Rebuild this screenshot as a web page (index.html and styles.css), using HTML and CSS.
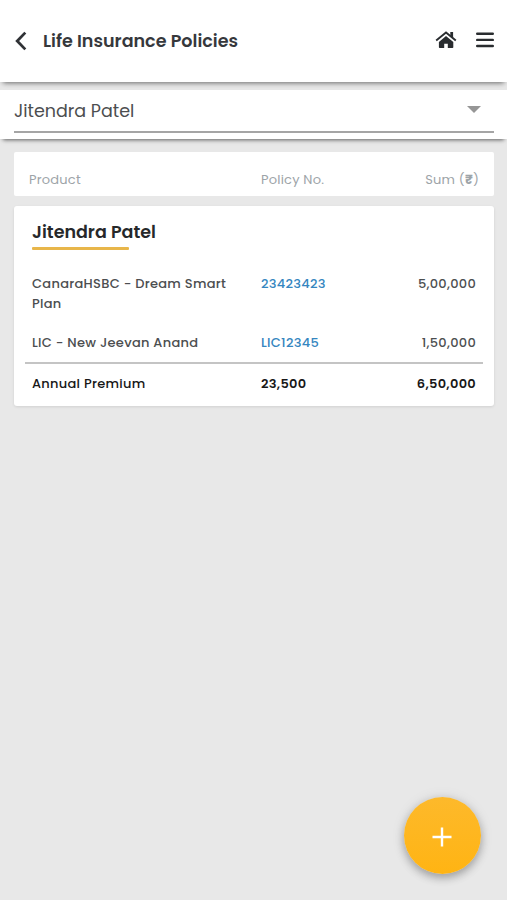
FILE: index.html
```html
<!DOCTYPE html>
<html lang="en">
<head>
<meta charset="utf-8">
<title>Life Insurance Policies</title>
<link rel="stylesheet" href="styles.css">
</head>
<body>
<header class="topbar">
  <svg class="back" viewBox="0 0 12 20"><path d="M10.3 1.6 2.2 10l8.1 8.4" fill="none" stroke="#303236" stroke-width="2.8"/></svg>
  <h1 class="title">Life Insurance Policies</h1>
  <svg class="home" viewBox="0 0 22 18"><path d="M11 5 3.9 11v5.2q0 .8.8.8h4.5v-4.2h3.6V17h4.7q.8 0 .8-.8V11z" fill="#292c2f"/><path d="M1.2 9.5 11 1.5l9.8 8" fill="none" stroke="#292c2f" stroke-width="1.9"/><path d="M15.3 1h2.8v6l-2.8-2.2z" fill="#292c2f"/></svg>
  <svg class="menu" viewBox="0 0 18 16"><path d="M1.2 1.8h15.6M1.2 7.9h15.6M1.2 14h15.6" fill="none" stroke="#292c2f" stroke-width="2.4" stroke-linecap="round"/></svg>
</header>
<section class="picker">
  <div class="select"><span class="selected">Jitendra Patel</span><span class="caret"></span></div>
</section>
<main class="content">
  <div class="columns grid">
    <span>Product</span><span>Policy No.</span><span class="h-sum">Sum (<b>₹</b>)</span>
  </div>
  <section class="card">
    <h2 class="holder">Jitendra Patel</h2>
    <div class="grid row first"><span class="product">CanaraHSBC - Dream Smart<br>Plan</span><a class="number">23423423</a><span class="amount">5,00,000</span></div>
    <div class="grid row second"><span class="product">LIC - New Jeevan Anand</span><a class="number">LIC12345</a><span class="amount">1,50,000</span></div>
    <div class="grid row total"><span class="label">Annual Premium</span><span>23,500</span><span class="amount">6,50,000</span></div>
  </section>
</main>
<button class="add" aria-label="Add policy"><svg viewBox="0 0 20 20"><path d="M10 .5v19M.5 10h19" stroke="#fff" stroke-width="2.4"/></svg></button>
</body>
</html>
```
FILE: styles.css
```css
* { box-sizing: border-box; }
body { margin: 0; height: 900px; overflow: hidden; background: #e8e8e8; font-family: Poppins, Inter, sans-serif; color: #4c4e50; }
.topbar { height: 82px; background: #fff; display: flex; align-items: center; padding: 0 13px 2px 15px; box-shadow: 0 4px 5px -3px rgba(0,0,0,.55); }
.back { width: 12px; height: 20px; margin-top: 2px; }
.title { margin: 0 auto 0 16px; padding-top: 1px; font-size: 17.55px; font-weight: 600; line-height: 26px; color: #36383c; white-space: nowrap; }
.home { width: 22px; height: 18px; margin-right: 19px; }
.menu { width: 18px; height: 16px; }
.picker { height: 49px; margin-top: 8px; background: #fff; padding: 0 13px 0 14px; box-shadow: 0 4px 4px -3px rgba(0,0,0,.6); }
.select { height: 43px; border-bottom: 2px solid #a5a5a5; display: flex; align-items: center; justify-content: space-between; }
.selected { font-size: 17.5px; line-height: 24px; }
.caret { border: 7px solid transparent; border-top-color: #969696; border-bottom: 0; margin-right: 13px; margin-top: -3px; }
.content { padding: 13px 13px 0 14px; }
.grid { display: grid; grid-template-columns: 229px 110px 1fr; white-space: nowrap; }
.columns { height: 44px; background: #fff; border-radius: 2px; padding: 18px 15px 0; grid-template-columns: 232px 110px 1fr; font-size: 13px; letter-spacing: .2px; line-height: 20px; color: #9da4a8; }
.h-sum { text-align: right; }
.h-sum b { font-weight: 700; }
.card { height: 200px; margin-top: 10px; background: #fff; border-radius: 3px; padding: 14px 11px 0; box-shadow: 0 1px 3px rgba(0,0,0,.1); }
.holder { margin: 0 7px; font-size: 17.5px; font-weight: 600; line-height: 24px; color: #26282a; }
.holder::after { content: ""; display: block; width: 97px; height: 3px; border-radius: 1px; margin-top: 3px; background: #e8b64a; }
.row { font-size: 13px; letter-spacing: .28px; line-height: 20px; font-weight: 500; padding: 0 7px; }
.first { margin-top: 24px; height: 59px; }
.second { height: 31px; border-bottom: 2px solid #c4c4c4; }
.total { padding-top: 10px; color: #181818; font-weight: 600; }
.label { font-weight: 500; }
.number { color: #3586c0; }
.amount { text-align: right; }
.add { position: absolute; left: 404px; top: 797px; width: 77px; height: 77px; border: 0; padding: 0; border-radius: 50%; background: linear-gradient(#fdb92b, #ffb413); display: flex; align-items: center; justify-content: center; box-shadow: 0 4px 8px rgba(0,0,0,.27), 0 1px 14px rgba(0,0,0,.1); }
.add svg { width: 20px; height: 20px; margin: 3px 1px 0 0; }
```
